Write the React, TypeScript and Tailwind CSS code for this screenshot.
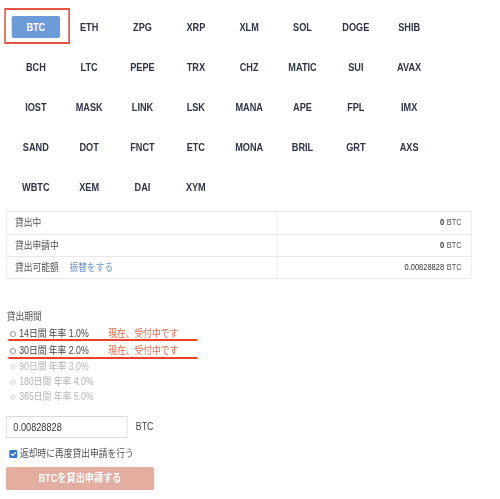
import React, { useState } from 'react';

const COINS = [
  'BTC', 'ETH', 'ZPG', 'XRP', 'XLM', 'SOL', 'DOGE', 'SHIB',
  'BCH', 'LTC', 'PEPE', 'TRX', 'CHZ', 'MATIC', 'SUI', 'AVAX',
  'IOST', 'MASK', 'LINK', 'LSK', 'MANA', 'APE', 'FPL', 'IMX',
  'SAND', 'DOT', 'FNCT', 'ETC', 'MONA', 'BRIL', 'GRT', 'AXS',
  'WBTC', 'XEM', 'DAI', 'XYM',
];

const PERIODS = [
  { days: 14, rate: '1.0%', open: true },
  { days: 30, rate: '2.0%', open: true },
  { days: 90, rate: '3.0%', open: false },
  { days: 180, rate: '4.0%', open: false },
  { days: 365, rate: '5.0%', open: false },
];

const CheckIcon: React.FC = () => (
  <svg width="10" height="8" viewBox="0 0 10 8" className="block">
    <rect x="0" y="0" width="10" height="8" rx="1.5" fill="#2f72d8" />
    <path d="M2.4 4.1 4.2 5.6 7.8 2.4" fill="none" stroke="#fff" strokeWidth="1.3" strokeLinecap="round" strokeLinejoin="round" />
  </svg>
);

const App: React.FC = () => {
  const [selected, setSelected] = useState('BTC');
  const [period, setPeriod] = useState<number | null>(null);
  const [amount, setAmount] = useState('0.00828828');
  const [renew, setRenew] = useState(true);

  return (
    <div className="w-[500px] h-[499px] bg-white overflow-hidden">
      {/* the page is drawn on a 600px sheet, narrowed to fit */}
      <div className="w-[600px] origin-top-left scale-x-[0.8333] text-[#333] font-['Liberation_Sans','Noto_Sans_CJK_JP',sans-serif]">
        {/* coin picker */}
        <div className="ml-[11px] pt-[7px] w-[512px] grid grid-cols-8 auto-rows-[40px]">
          {COINS.map((c) => (
            <div key={c} className="relative flex items-center justify-center">
              {c === selected ? (
                <>
                  <button
                    onClick={() => setSelected(c)}
                    className="w-[58px] h-[22px] rounded-[2px] bg-[#6b9bd9] text-white text-[11px] font-bold"
                  >
                    {c}
                  </button>
                  <div className="absolute left-[-6px] top-[1px] w-[79px] h-[36px] border-2 border-[#e8533f] pointer-events-none" />
                </>
              ) : (
                <button onClick={() => setSelected(c)} className="text-[11px] font-bold text-[#2f3444]">
                  {c}
                </button>
              )}
            </div>
          ))}
        </div>

        {/* balances */}
        <div className="mt-[4px] ml-[7px] w-[559px] border border-[#e8e8e8] text-[10.5px]">
          <div className="flex h-[22px]">
            <div className="w-[325px] border-r border-[#e8e8e8] flex items-center pl-[10px] text-[#555]">貸出中</div>
            <div className="flex-1 flex items-center justify-end pr-[11px] text-[9px]">
              <span className="font-bold text-[#333]">0</span>
              <span className="ml-[3px] text-[#555]">BTC</span>
            </div>
          </div>
          <div className="flex h-[22px] border-t border-[#e8e8e8]">
            <div className="w-[325px] border-r border-[#e8e8e8] flex items-center pl-[10px] text-[#555]">貸出申請中</div>
            <div className="flex-1 flex items-center justify-end pr-[11px] text-[9px]">
              <span className="font-bold text-[#333]">0</span>
              <span className="ml-[3px] text-[#555]">BTC</span>
            </div>
          </div>
          <div className="flex h-[22px] border-t border-[#e8e8e8]">
            <div className="w-[325px] border-r border-[#e8e8e8] flex items-center pl-[10px] text-[#555]">
              <span>貸出可能額</span>
              <a className="ml-[13px] text-[#6d98c9] cursor-pointer">振替をする</a>
            </div>
            <div className="flex-1 flex items-center justify-end pr-[11px] text-[9px]">
              <span className="text-[#333]">0.00828828</span>
              <span className="ml-[3px] text-[#555]">BTC</span>
            </div>
          </div>
        </div>

        {/* lending period */}
        <div className="mt-[31px] pl-[8px] h-[12px] leading-[12px] text-[10.5px] text-[#555]">貸出期間</div>
        <div className="mt-[4px] pl-[12px]">
          {PERIODS.map((p, i) => (
            <label
              key={p.days}
              className={`relative flex items-center ${p.open ? 'h-[16px]' : 'h-[15px]'} ${i === 1 ? 'mt-[1px]' : ''} text-[10.5px] ${p.open ? 'text-[#444] cursor-pointer' : 'text-[#b5b5b5]'}`}
              onClick={() => p.open && setPeriod(p.days)}
            >
              <span
                className={`w-[7px] h-[6px] rounded-full border ${p.open ? 'border-[#888] bg-white' : 'border-[#dedede] bg-[#efefef]'} ${period === p.days ? 'bg-[#2f72d8] border-[#2f72d8]' : ''}`}
              />
              <span className="ml-[4px] w-[107px] whitespace-nowrap">
                {p.days}日間 年率 {p.rate}
              </span>
              {p.open && <span className="text-[#df6d4f] whitespace-nowrap">現在、受付中です</span>}
              {p.open && (
                <span className={`absolute left-[-2px] ${i === 0 ? 'top-[13px]' : 'top-[14px]'} w-[227px] h-[1.5px] bg-[#e8412c]`} />
              )}
            </label>
          ))}
        </div>

        {/* amount */}
        <div className="mt-[12px] ml-[7px] flex items-center">
          <input
            value={amount}
            onChange={(e) => setAmount(e.target.value)}
            className="w-[146px] h-[22px] border border-[#d9d9d9] px-[8px] text-[11px] text-[#333] outline-none"
          />
          <span className="ml-[10px] text-[10.5px] text-[#444]">BTC</span>
        </div>

        <label className="mt-[10px] ml-[11px] h-[12px] flex items-center cursor-pointer" onClick={() => setRenew(!renew)}>
          {renew ? <CheckIcon /> : <span className="w-[10px] h-[8px] border border-[#999] rounded-[1.5px]" />}
          <span className="ml-[3px] text-[10.5px] text-[#555]">返却時に再度貸出申請を行う</span>
        </label>

        <button className="mt-[7px] ml-[7px] w-[178px] h-[23px] rounded-[2px] bg-[#e3ae9f] text-white text-[11px] font-bold">
          BTCを貸出申請する
        </button>
      </div>
    </div>
  );
};

export default App;
